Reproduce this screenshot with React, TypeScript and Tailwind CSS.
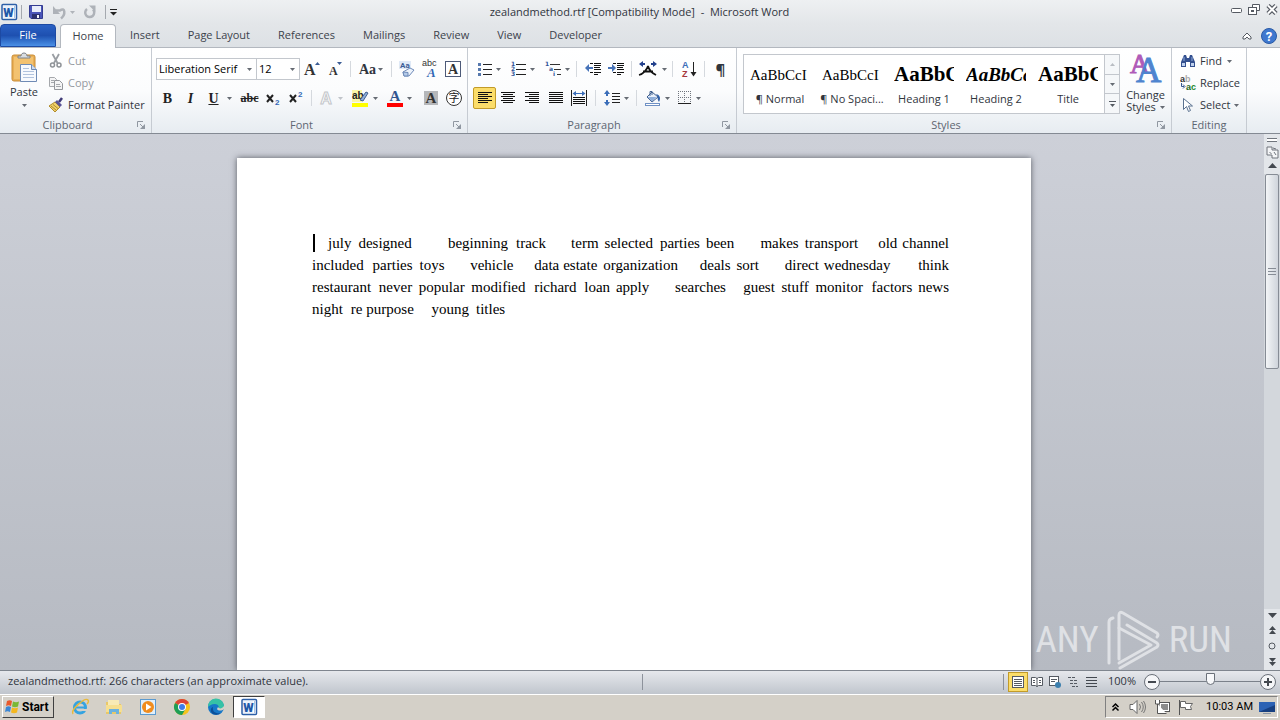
import React, { useState } from 'react';

interface IconProps {
  children: React.ReactNode;
  w?: number;
  h?: number;
}

const Icon: React.FC<IconProps> = ({ children, w = 16, h = 16 }) => (
  <svg width={w} height={h} viewBox={`0 0 ${w} ${h}`} className="block shrink-0 overflow-visible" aria-hidden="true">
    {children}
  </svg>
);

const Arrow: React.FC<{ color?: string }> = ({ color = '#666b73' }) => (
  <Icon w={5} h={3}>
    <path d="M0 0h5L2.5 3z" fill={color} />
  </Icon>
);

interface ToolProps {
  label: string;
  className: string;
  arrow?: boolean;
  children: React.ReactNode;
}

const Tool: React.FC<ToolProps> = ({ label, className, arrow, children }) => (
  <button
    type="button"
    aria-label={label}
    className={`flex h-[22px] shrink-0 items-center justify-center gap-1 rounded-xs hover:bg-amber-100 ${className}`}
  >
    {children}
    {arrow && <Arrow />}
  </button>
);

const Sep = () => <span className="mx-1 h-4 w-px shrink-0 bg-[#d5d9de]" />;

interface GroupProps {
  title: string;
  className: string;
  launcher?: boolean;
  children: React.ReactNode;
}

const Group: React.FC<GroupProps> = ({ title, className, launcher = true, children }) => (
  <section className={`flex shrink-0 flex-col border-r border-[#c6cbd2] ${className}`}>
    <div className="flex-1">{children}</div>
    <div className="flex h-4 items-center text-[#5e6672]">
      <span className="flex-1 text-center">{title}</span>
      {launcher && (
        <button type="button" aria-label={`${title} options`} className="mr-1 flex h-3 w-3 items-center justify-center">
          <Icon w={8} h={8}>
            <path d="M.5 6V.5H6M3 3l3 3" fill="none" stroke="#9097a1" />
            <path d="M8 3v5H3z" fill="#9097a1" />
          </Icon>
        </button>
      )}
    </div>
  </section>
);

/* ---------- icons ---------- */

const Lines: React.FC<{ rows: [number, number][] }> = ({ rows }) => (
  <Icon w={16} h={14}>
    {rows.map(([x, w], i) => (
      <rect key={i} x={x} y={1 + i * 2} width={w} height={1} fill="#111" />
    ))}
  </Icon>
);

const WordIcon = () => (
  <Icon>
    <rect x="1" y=".5" width="14.5" height="15" rx="1" fill="#fff" stroke="#2c5fa8" strokeWidth="1.5" />
    <rect x="13" y="2" width="1" height="12" fill="#a9c3e6" />
    <rect x="2" y="2" width="10" height="12" fill="#eaf2fc" />
    <text x="7.5" y="12.5" fontSize="12" fontWeight="900" fontFamily="Roboto, sans-serif" textAnchor="middle" fill="#1e58a8">W</text>
  </Icon>
);

const SaveIcon = () => (
  <Icon>
    <path d="M1.5 1.5h13v13H3l-1.500-1.500z" fill="#4a55b8" stroke="#343c91" />
    <rect x="4" y="2" width="9" height="6" fill="#e8edfa" />
    <rect x="4" y="10" width="8" height="5" fill="#2b3170" />
    <rect x="9" y="11" width="2" height="3" fill="#f2f4fb" />
  </Icon>
);

const UndoIcon = () => (
  <Icon w={14}>
    <path d="M4 6.500h4c5-4 6 4 1 8" fill="none" stroke="#aeb2b8" strokeWidth="2.500" />
    <path d="M1 2v8h7z" fill="#aeb2b8" />
  </Icon>
);

const RedoIcon = () => (
  <Icon w={14}>
    <path d="M10 5.500a4.500 4.500 0 1 1-6-.5" fill="none" stroke="#aeb2b8" strokeWidth="2.500" />
    <path d="M6 1.500h6.500v6.500z" fill="#aeb2b8" />
  </Icon>
);

const PasteIcon = () => (
  <Icon w={28} h={32}>
    <rect x="2" y="3" width="23" height="26" rx="2" fill="#e9b057" stroke="#c98c36" />
    <rect x="4" y="5" width="19" height="22" fill="#f3c270" />
    <path d="M8 6V4h3c0-4 6-4 6 0h3v2z" fill="#d9dde2" stroke="#7c8289" />
    <path d="M10.500 12.500h11l5 5v12h-16z" fill="#f7fafe" stroke="#6f8bb5" />
    <path d="M21.500 12.500v5h5" fill="#cddbef" stroke="#6f8bb5" />
    <path d="M13 16.500h6M13 19.500h11M13 22.500h11M13 25.500h11" stroke="#b1c3de" />
  </Icon>
);

const CutIcon = () => (
  <Icon>
    <path d="M4.500 1l5 9M11 1L6 10" stroke="#9a9ea3" strokeWidth="1.800" />
    <circle cx="4.500" cy="12" r="2" fill="none" stroke="#8e9297" strokeWidth="1.500" />
    <circle cx="11" cy="12" r="2" fill="none" stroke="#8e9297" strokeWidth="1.500" />
  </Icon>
);

const CopyIcon = () => (
  <Icon>
    <path d="M1.500 2.500h5l2 2v7h-7z" fill="#f4f4f5" stroke="#a5a8ac" />
    <path d="M6.500 5.500h5l3 3v6h-8z" fill="#f4f4f5" stroke="#94979c" />
    <path d="M3 5.500h3M3 7.500h3M8 9.500h4M8 11.500h5" stroke="#a5a8ac" />
  </Icon>
);

const PainterIcon = () => (
  <Icon>
    <path d="M1 9l6-4 5 5-5 5z" fill="#f0d069" stroke="#b08c2c" />
    <path d="M3 9l5 4M5 7.500l5 4" stroke="#b08c2c" />
    <path d="M7 5l2-2 5 5-2 2z" fill="#5a5497" />
    <path d="M11 5l3-4" stroke="#3e3976" strokeWidth="2.500" />
  </Icon>
);

const ClearIcon = () => (
  <Icon w={18} h={18}>
    <rect x="1" y="1" width="12" height="8" fill="#dfe9f7" />
    <text x="2" y="8" fontSize="8" fontWeight="bold" fontFamily="Roboto, sans-serif" fill="#3d5d96">Aa</text>
    <path d="M5 12l7-4 4 2-5 6H6z" fill="#edf3fb" stroke="#6f8bb9" />
    <path d="M5 12l5 .5V16H6z" fill="#b5cbe9" stroke="#6f8bb9" />
  </Icon>
);

const BulletsIcon = () => (
  <Icon w={14} h={14}>
    <path d="M0 1h3v3H0zM0 6h3v3H0zM0 11h3v3H0z" fill="#5678ad" />
    <path d="M5 2.500h9M5 7.500h9M5 12.500h9" stroke="#222" />
  </Icon>
);

const NumberingIcon = () => (
  <Icon w={15} h={16}>
    <g fontSize="6" fontWeight="bold" fontFamily="DejaVu Sans, sans-serif" fill="#2f5597">
      <text x="0" y="5">1</text>
      <text x="0" y="10">2</text>
      <text x="0" y="15">3</text>
    </g>
    <path d="M5 3.500h10M5 8.500h10M5 13.500h10" stroke="#222" />
  </Icon>
);

const MultilevelIcon = () => (
  <Icon w={16} h={16}>
    <g fontSize="6" fontWeight="bold" fontFamily="DejaVu Sans, sans-serif" fill="#2f5597">
      <text x="0" y="5">1</text>
      <text x="4" y="10">a</text>
      <text x="8" y="15">i</text>
    </g>
    <path d="M5 3.500h10M9 8.500h7M12 13.500h4" stroke="#333" />
  </Icon>
);

const IndentIcon: React.FC<{ right?: boolean }> = ({ right }) => (
  <Icon>
    <path d="M5 2.500h3M9 2.500h7M9 4.500h7M9 8.500h7M5 11.500h3M9 11.500h7M9 13.500h4" stroke="#111" />
    <path d="M9 6h6v1H9z" fill="#111" />
    <path d={right ? 'M0 6h4V3l4 4-4 4V8H0z' : 'M8 6H4V3L0 7l4 4V8h4z'} fill="#4773b8" />
  </Icon>
);

const AsianLayoutIcon = () => (
  <Icon w={20} h={16}>
    <path d="M1 14c4-1 8-5 9-9 1 4 4 7 8 9M5 10.500h10" fill="none" stroke="#111" strokeWidth="1.800" />
    <path d="M5 0v6L1 3zM15 0v6l4-3z" fill="#22408c" />
    <path d="M5 3h2M13 3h2" stroke="#22408c" strokeWidth="2" />
  </Icon>
);

const SortIcon = () => (
  <Icon>
    <text x="1" y="7" fontSize="9" fontWeight="bold" fontFamily="Liberation Sans, sans-serif" fill="#3a6db8">A</text>
    <text x="1" y="16" fontSize="9" fontWeight="bold" fontFamily="Liberation Sans, sans-serif" fill="#a5373c">Z</text>
    <path d="M12.500 1v13" stroke="#222" />
    <path d="M9.500 11h6l-3 4.500z" fill="#222" />
  </Icon>
);

const DistributeIcon = () => (
  <Icon w={16} h={16}>
    <path d="M.5 0v16M15.500 0v16" stroke="#222" />
    <path d="M4 3.500h8" stroke="#3a6db8" />
    <path d="M5 1v5L1.500 3.500zM11 1v5l3.500-2.500z" fill="#3a6db8" />
    <path d="M2 7.500h12M2 9.500h12M2 11.500h12M2 13.500h12" stroke="#111" />
  </Icon>
);

const SpacingIcon = () => (
  <Icon w={16} h={16}>
    <path d="M3 0l3 4H4v2H2V4H0zM3 16l3-4H4v-2H2v2H0z" fill="#3a6db8" />
    <path d="M8 3.500h8M8 6.500h8M8 9.500h8M8 12.500h8" stroke="#222" />
  </Icon>
);

const BucketIcon = () => (
  <Icon w={17} h={16}>
    <path d="M8 2l6 5-6 5-5-5z" fill="#e9f0fa" stroke="#41608f" />
    <path d="M3.500 7h9L8 11.500z" fill="#8eaeda" />
    <path d="M6 6V1.500h2V5" fill="none" stroke="#41608f" />
    <path d="M12 4c4 1 5 4 3 8-1-2-2-3-1-5z" fill="#2f5fa8" />
    <rect x="1.500" y="13.500" width="14" height="2" fill="#fff" stroke="#6f91c4" />
  </Icon>
);

const BordersIcon = () => (
  <Icon w={14} h={14}>
    <path d="M.5 0v13M6.500 0v13M12.500 0v13M0 .5h13M0 6.500h13" stroke="#70757d" strokeDasharray="1 1" />
    <path d="M0 12.500h13" stroke="#222" />
  </Icon>
);

const FindIcon = () => (
  <Icon>
    <path d="M4 2h2l1 3h2l1-3h2l3 7v5h-5V9H6v5H1V9z" fill="#34508f" />
    <path d="M2 10h3v3H2zM11 10h3v3h-3z" fill="#bfd1ee" />
    <path d="M4 4v4M12 4v4" stroke="#8eaadb" />
  </Icon>
);

const ReplaceIcon = () => (
  <Icon>
    <g fontSize="9" fontWeight="bold" fontFamily="Liberation Sans, sans-serif">
      <text x="0" y="7" fill="#333">a</text>
      <text x="5" y="7" fill="#aaa">b</text>
      <text x="6" y="15" fill="#1c6a26">a</text>
      <text x="11" y="15" fill="#23892e">c</text>
    </g>
    <path d="M1.500 8v3.500H4M3 9.500l2 2-2 2" fill="none" stroke="#34578f" />
  </Icon>
);

const CursorIcon = () => (
  <Icon>
    <path d="M3.500 1.500v11l3-3 2 5 2-1-2-4.500h4z" fill="#fff" stroke="#5b7290" />
  </Icon>
);

const WindowsFlag = () => (
  <Icon w={16} h={16}>
    <path d="M3 2c2-1 3.500-1 5 0L7 7c-2-1-3-1-5 0z" fill="#e8592b" />
    <path d="M9 2.500c2 1 4 1 6 0L14 7.500c-2 1-4 1-6 0z" fill="#7ab834" />
    <path d="M2 8c2-1 3-1 5 0l-1 5c-2-1-3-1-5 0z" fill="#3a86d4" />
    <path d="M8 8.500c2 1 4 1 6 0l-1 5c-2 1-4 1-6 0z" fill="#f4b71f" />
  </Icon>
);

const ExplorerE = () => (
  <Icon w={18} h={18}>
    <circle cx="9" cy="9.500" r="5.500" fill="none" stroke="#35a3e0" strokeWidth="3" />
    <path d="M5 9.500h9" stroke="#35a3e0" strokeWidth="2" />
    <path d="M10 11h6v2h-6z" fill="#d4d0c8" />
    <path d="M2 16C-1 12 14-1 17 2c1 1 0 3-1 4" fill="none" stroke="#e8b93a" strokeWidth="1.500" />
  </Icon>
);

const FolderIcon = () => (
  <Icon w={18} h={18}>
    <path d="M1 4h6l1 2h8v10H1z" fill="#e9c869" />
    <path d="M3 2h11v5H3z" fill="#f8eab5" />
    <path d="M1 7h16v7H1z" fill="#f6df90" />
    <path d="M4 16v-5h10v5h-3v-2H7v2z" fill="#6cb2de" />
  </Icon>
);

const PlayerIcon = () => (
  <Icon w={18} h={18}>
    <rect x="1.500" y="1.500" width="15" height="15" fill="#e1effa" stroke="#5b9ad0" />
    <circle cx="9" cy="9" r="6" fill="#f08c1e" />
    <path d="M7 5.500v7L12.500 9z" fill="#fff" />
  </Icon>
);

const ChromeIcon = () => (
  <Icon w={18} h={18}>
    <circle cx="9" cy="9" r="8" fill="#f5c31d" />
    <path d="M9 9L2.070 5A8 8 0 0 1 15.930 5z" fill="#dc4437" />
    <path d="M9 9L2.070 5A8 8 0 0 0 9 17l3.500-6z" fill="#1e9e57" />
    <circle cx="9" cy="9" r="4" fill="#fff" />
    <circle cx="9" cy="9" r="3" fill="#3f7de8" />
  </Icon>
);

const EdgeIcon = () => (
  <Icon w={18} h={18}>
    <circle cx="9" cy="9" r="8" fill="#1677c8" />
    <path d="M1 9a8 8 0 0 1 16-1c0 3-3 4-6 3 2-2 0-5-3-5-4 0-6 2-7 3z" fill="#36c2a6" />
    <path d="M6 9c-1 5 3 7 8 6a8 8 0 0 1-8 1c-3-2-3-6 0-7z" fill="#0c4f99" />
    <path d="M17 11c-2 2-6 2-7 0l1-2c1 2 4 2 6-1z" fill="#d4d0c8" />
  </Icon>
);

// rounded triangle drawn as two interlocking ribbons
const WatermarkPlay = () => (
  <Icon w={54} h={60}>
    <g fill="none" stroke="#dfe1e5" strokeWidth="3" strokeLinejoin="round" strokeLinecap="round">
      <path d="M2 53V12q0-3 4-4" />
      <path d="M12 49V5q0-4 4-2l34 20q2 2 0 4" />
      <path d="M12 18l32 17L12 53" />
      <path d="M13 58l37-21q2-2 0-4L20 15" />
    </g>
  </Icon>
);

/* ---------- document ---------- */

type Run = [number, string];

// each run is the width of the blank before a word, then the word
const lines: Run[][] = [
  [[16, 'july'], [7, 'designed'], [36, 'beginning'], [8, 'track'], [25, 'term'], [6, 'selected'], [7, 'parties'], [6, 'been'], [26, 'makes'], [6, 'transport'], [20, 'old'], [5, 'channel']],
  [[0, 'included'], [9, 'parties'], [7, 'toys'], [26, 'vehicle'], [21, 'data'], [4, 'estate'], [6, 'organization'], [22, 'deals'], [6, 'sort'], [26, 'direct'], [5, 'wednesday'], [28, 'think']],
  [[0, 'restaurant'], [8, 'never'], [7, 'popular'], [7, 'modified'], [9, 'richard'], [8, 'loan'], [6, 'apply'], [27, 'searches'], [18, 'guest'], [7, 'stuff'], [7, 'monitor'], [9, 'factors'], [6, 'news']],
  [[0, 'night'], [8, 're'], [4, 'purpose'], [18, 'young'], [7, 'titles'], [450, '']],
];

const Line: React.FC<{ runs: Run[] }> = ({ runs }) => (
  <p className="flex whitespace-nowrap">
    {runs.map(([gap, word], i) => (
      <React.Fragment key={i}>
        <span className="basis-0" style={{ flexGrow: gap }} />
        <span>{word}</span>
      </React.Fragment>
    ))}
  </p>
);

const tabs = ['Insert', 'Page Layout', 'References', 'Mailings', 'Review', 'View', 'Developer'];

const styles = [
  { name: '¶ Normal', sample: 'AaBbCcI', look: 'text-[15px]' },
  { name: '¶ No Spaci...', sample: 'AaBbCcI', look: 'text-[15px]' },
  { name: 'Heading 1', sample: 'AaBbC', look: 'text-[21px] font-bold' },
  { name: 'Heading 2', sample: 'AaBbCc', look: 'text-[19px] font-bold italic' },
  { name: 'Title', sample: 'AaBbC', look: 'text-[21px] font-bold' },
];

const TitleBar = () => (
  <header className="flex h-6 shrink-0 items-center bg-linear-to-b from-[#eef0f2] to-[#e3e6e9] pl-px">
    <div className="flex flex-1 items-center">
      <WordIcon />
      <span className="mr-1.5 ml-1 h-3.5 w-px bg-[#a5a9af]" />
      <button type="button" aria-label="Save" className="w-5"><SaveIcon /></button>
      <button type="button" aria-label="Undo" className="ml-1 flex items-center gap-1"><UndoIcon /><Arrow color="#b0b4ba" /></button>
      <button type="button" aria-label="Redo" className="ml-2"><RedoIcon /></button>
      <span className="mr-1 ml-2 h-3.5 w-px bg-[#a5a9af]" />
      <button type="button" aria-label="Customize">
        <Icon w={7} h={7}><path d="M0 .5h7" stroke="#222" /><path d="M0 3h7L3.500 6.500z" fill="#222" /></Icon>
      </button>
    </div>
    <h1 className="whitespace-pre">zealandmethod.rtf [Compatibility Mode]  -  Microsoft Word</h1>
    <div className="flex flex-1 items-center justify-end gap-1.5 pr-0.5 pb-1">
      <button type="button" aria-label="Minimize">
        <Icon w={11} h={12}><rect x=".5" y="4.500" width="10" height="4" rx="1" fill="#fff" stroke="#555a62" /></Icon>
      </button>
      <button type="button" aria-label="Restore">
        <Icon w={12} h={12}>
          <path d="M4.500 3.500v-3h7v6h-3" fill="#fff" stroke="#555a62" />
          <rect x=".5" y="3.500" width="8" height="7" fill="#fff" stroke="#555a62" />
          <rect x="3" y="6" width="3" height="2" fill="#555a62" />
        </Icon>
      </button>
      <button type="button" aria-label="Close">
        <Icon w={12} h={12}>
          <path d="M2 1.500l8 8M10 1.500l-8 8" stroke="#555a62" strokeWidth="4.500" />
          <path d="M2 1.500l8 8M10 1.500l-8 8" stroke="#fff" strokeWidth="2" />
        </Icon>
      </button>
    </div>
  </header>
);

const TabBar = () => (
  <nav className="flex h-6 shrink-0 items-stretch border-b border-[#b3b8bf] bg-linear-to-b from-[#e3e6e9] to-[#dde1e5] text-[#3c424b]">
    <button type="button" className="w-14 rounded-t-sm border border-[#1d4aa3] bg-linear-to-b from-[#2a61c4] via-[#1e50b0] to-[#4a90e6] text-white">File</button>
    <button type="button" className="-mb-px ml-1 w-14 rounded-t-sm border border-b-0 border-[#b3b8bf] bg-white">Home</button>
    {tabs.map((tab) => (
      <button key={tab} type="button" className="px-3.5">{tab}</button>
    ))}
    <div className="ml-auto flex items-center gap-2 pr-0.5">
      <button type="button" aria-label="Minimize the Ribbon">
        <Icon w={10} h={8}><path d="M1 5l4-4 4 4v2H7L5 5 3 7H1z" fill="#fff" stroke="#555a62" /></Icon>
      </button>
      <button type="button" aria-label="Help">
        <Icon w={18} h={18}>
          <circle cx="9" cy="9" r="7.500" fill="#3f78cf" stroke="#2a5aa5" />
          <text x="9" y="14" fontSize="13" fontWeight="bold" fontFamily="Roboto, sans-serif" textAnchor="middle" fill="#fff">?</text>
        </Icon>
      </button>
    </div>
  </nav>
);

const Ribbon = () => {
  const [font, setFont] = useState('Liberation Serif');
  const [size, setSize] = useState('12');

  return (
    <div className="flex h-[86px] shrink-0 border-b border-[#848a93] bg-linear-to-b from-white via-[#fbfcfd] to-[#e7ecf1] text-[#30353d]">
      <Group title="Clipboard" className="w-[152px]">
        <div className="flex">
          <button type="button" className="flex w-12 flex-col items-center pt-1">
            <PasteIcon />
            <span className="mb-1 leading-4">Paste</span>
            <Arrow />
          </button>
          <div className="flex flex-col pt-0.5">
            <button type="button" disabled className="flex h-[22px] items-center gap-1 text-[#9599a0]"><CutIcon />Cut</button>
            <button type="button" disabled className="flex h-[22px] items-center gap-1 text-[#9599a0]"><CopyIcon />Copy</button>
            <button type="button" className="flex h-[22px] items-center gap-1 whitespace-nowrap"><PainterIcon />Format Painter</button>
          </div>
        </div>
      </Group>

      <Group title="Font" className="w-[316px]">
        <div className="mt-2.5 flex h-[22px] items-center pl-1">
          <label className="flex h-[22px] w-[101px] items-center border border-[#c3c7cd] bg-white pr-1">
            <select aria-label="Font" value={font} onChange={(e) => setFont(e.target.value)} className="min-w-0 flex-1 appearance-none pl-0.5 text-black outline-none">
              <option>Liberation Serif</option>
              <option>Liberation Sans</option>
            </select>
            <Arrow />
          </label>
          <label className="flex h-[22px] w-[43px] items-center border border-l-0 border-[#c3c7cd] bg-white pr-1">
            <select aria-label="Font Size" value={size} onChange={(e) => setSize(e.target.value)} className="min-w-0 flex-1 appearance-none pl-0.5 text-black outline-none">
              <option>12</option>
              <option>14</option>
            </select>
            <Arrow />
          </label>
          <Tool label="Grow Font" className="w-6">
            <Icon><text x="0" y="14" fontSize="16" fontWeight="bold" fontFamily="Liberation Serif, serif" fill="#333">A</text><path d="M11 4h5l-2.500-3z" fill="#3a5b94" /></Icon>
          </Tool>
          <Tool label="Shrink Font" className="w-[22px]">
            <Icon><text x="2" y="14" fontSize="12" fontWeight="bold" fontFamily="Liberation Serif, serif" fill="#333">A</text><path d="M10 1h5l-2.500 3z" fill="#3a5b94" /></Icon>
          </Tool>
          <Sep />
          <Tool label="Change Case" className="w-8" arrow>
            <span className="-mr-0.5 font-['Liberation_Serif',serif] text-[14px] font-bold">Aa</span>
          </Tool>
          <Sep />
          <Tool label="Clear Formatting" className="w-[22px]"><ClearIcon /></Tool>
          <Tool label="Phonetic Guide" className="w-[23px]">
            <Icon w={16} h={18}>
              <text x="0" y="6" fontSize="9" fontFamily="Liberation Sans, sans-serif" fill="#333">abc</text>
              <text x="5" y="17" fontSize="13" fontWeight="bold" fontStyle="italic" fontFamily="Liberation Serif, serif" fill="#3267b5">A</text>
            </Icon>
          </Tool>
          <Tool label="Character Border" className="w-[23px]">
            <Icon><rect x=".5" y=".5" width="15" height="15" fill="#fff" stroke="#4d5a78" /><text x="8" y="13" fontSize="14" fontWeight="bold" fontFamily="Liberation Serif, serif" textAnchor="middle" fill="#333">A</text></Icon>
          </Tool>
        </div>
        <div className="mt-[7px] flex h-[22px] items-center pl-1 font-['Liberation_Serif',serif] text-[14px] font-bold text-[#222]">
          <Tool label="Bold" className="w-[23px]">B</Tool>
          <Tool label="Italic" className="w-[23px] italic">I</Tool>
          <Tool label="Underline" className="w-9 underline" arrow><span className="mr-1">U</span></Tool>
          <Tool label="Strikethrough" className="w-[23px] text-[12px] line-through">abc</Tool>
          <Tool label="Subscript" className="w-[23px]">
            <Icon><path d="M2 5l6 7M8 5l-6 7" stroke="#222" strokeWidth="2" /><text x="10" y="15" fontSize="8" fontWeight="bold" fontFamily="Liberation Sans, sans-serif" fill="#3267b5">2</text></Icon>
          </Tool>
          <Tool label="Superscript" className="w-[23px]">
            <Icon><path d="M2 5l6 7M8 5l-6 7" stroke="#222" strokeWidth="2" /><text x="10" y="7" fontSize="8" fontWeight="bold" fontFamily="Liberation Sans, sans-serif" fill="#3267b5">2</text></Icon>
          </Tool>
          <Sep />
          <Tool label="Text Effects" className="w-[29px]">
            <Icon><text x="8" y="14" fontSize="16" fontWeight="bold" fontFamily="Liberation Sans, sans-serif" textAnchor="middle" fill="#fff" stroke="#c3c6ca">A</text></Icon>
            <Arrow color="#c0c4ca" />
          </Tool>
          <Tool label="Highlight" className="ml-1 w-8" arrow>
            <Icon w={17} h={17}>
              <rect x="0" y="0" width="10" height="12" fill="#fbf7a8" />
              <text x="0" y="9" fontSize="10" fontFamily="Liberation Sans, sans-serif" fill="#222">ab</text>
              <path d="M8 10l6-8 2 1-5 8z" fill="#8eaeda" stroke="#41608f" />
              <rect x="0" y="13" width="16" height="4" fill="#ff0" />
            </Icon>
          </Tool>
          <Tool label="Font Color" className="ml-0.5 w-8" arrow>
            <Icon w={16} h={17}>
              <text x="8" y="11" fontSize="15" fontWeight="bold" fontFamily="Liberation Serif, serif" textAnchor="middle" fill="#31558f">A</text>
              <rect x="0" y="13" width="16" height="4" fill="#f00" />
            </Icon>
          </Tool>
          <Tool label="Character Shading" className="ml-1 w-[23px]">
            <Icon><rect x="1" y="1" width="14" height="14" fill="#b5b7ba" /><text x="8" y="13" fontSize="15" fontWeight="bold" fontFamily="Liberation Serif, serif" textAnchor="middle" fill="#333">A</text></Icon>
          </Tool>
          <Tool label="Enclose Characters" className="w-[23px]">
            <Icon><circle cx="8" cy="8" r="7.500" fill="#fff" stroke="#333" /><text x="8" y="12" fontSize="11" fontWeight="normal" fontFamily="Noto Sans CJK SC, sans-serif" textAnchor="middle" fill="#222">字</text></Icon>
          </Tool>
        </div>
      </Group>

      <Group title="Paragraph" className="w-[269px]">
        <div className="mt-2.5 flex h-[22px] items-center pl-1">
          <Tool label="Bullets" className="w-[34px]" arrow><BulletsIcon /></Tool>
          <Tool label="Numbering" className="w-[34px]" arrow><NumberingIcon /></Tool>
          <Tool label="Multilevel List" className="ml-0.5 w-[30px]" arrow><MultilevelIcon /></Tool>
          <Sep />
          <Tool label="Decrease Indent" className="w-[23px]"><IndentIcon /></Tool>
          <Tool label="Increase Indent" className="w-[23px]"><IndentIcon right /></Tool>
          <Sep />
          <Tool label="Asian Layout" className="w-8" arrow><AsianLayoutIcon /></Tool>
          <Sep />
          <Tool label="Sort" className="w-[23px]"><SortIcon /></Tool>
          <Sep />
          <Tool label="Show Marks" className="w-[23px] text-[15px] font-bold">¶</Tool>
        </div>
        <div className="mt-[7px] flex h-[22px] items-center pl-[5px]">
          <Tool label="Align Left" className="w-[23px] border border-[#c29b29] bg-[#fbdd6a]">
            <Lines rows={[[1, 14], [1, 10], [1, 14], [1, 10], [1, 14], [1, 10]]} />
          </Tool>
          <Tool label="Center" className="w-6"><Lines rows={[[1, 14], [3, 10], [1, 14], [3, 10], [1, 14], [3, 10]]} /></Tool>
          <Tool label="Align Right" className="w-6"><Lines rows={[[1, 14], [5, 10], [1, 14], [5, 10], [1, 14], [5, 10]]} /></Tool>
          <Tool label="Justify" className="w-[23px]"><Lines rows={[[1, 14], [1, 14], [1, 14], [1, 14], [1, 14], [1, 14]]} /></Tool>
          <Tool label="Distributed" className="w-6"><DistributeIcon /></Tool>
          <Sep />
          <Tool label="Line Spacing" className="w-8" arrow><SpacingIcon /></Tool>
          <Sep />
          <Tool label="Shading" className="w-8" arrow><BucketIcon /></Tool>
          <Tool label="Borders" className="w-8" arrow><BordersIcon /></Tool>
        </div>
      </Group>

      <Group title="Styles" className="w-[435px]">
        <div className="flex pt-1.5 pl-1.5">
          <div className="flex h-[60px] w-[377px] border border-[#c3c7cd] bg-white">
            {styles.map((s) => (
              <button key={s.name} type="button" className="flex w-[72px] flex-col items-center">
                <span className={`flex h-10 w-[60px] items-center overflow-hidden font-['Liberation_Serif',serif] whitespace-nowrap text-black ${s.look}`}>{s.sample}</span>
                <span className="-mt-1 leading-4 whitespace-nowrap">{s.name}</span>
              </button>
            ))}
            <div className="flex flex-1 flex-col divide-y divide-[#c3c7cd] border-l border-[#c3c7cd] bg-[#f5f7f9]">
              <button type="button" aria-label="Row up" className="flex flex-1 items-center justify-center"><Icon w={5} h={3}><path d="M0 3h5L2.500 0z" fill="#b9bdc3" /></Icon></button>
              <button type="button" aria-label="Row down" className="flex flex-1 items-center justify-center"><Arrow /></button>
              <button type="button" aria-label="More" className="flex flex-1 items-center justify-center"><Icon w={7} h={6}><path d="M0 .5h7" stroke="#555a62" /><path d="M1 3h5L3.500 6z" fill="#555a62" /></Icon></button>
            </div>
          </div>
          <button type="button" className="flex flex-1 flex-col items-center leading-3">
            <Icon w={32} h={35}>
              <text x="0" y="19" fontSize="27" fontFamily="Liberation Serif, serif" fill="#b05bb8" stroke="#b05bb8">A</text>
              <text x="6" y="28" fontSize="35" fontFamily="Liberation Serif, serif" fill="#4f84cf" stroke="#4f84cf">A</text>
            </Icon>
            <span>Change</span>
            <span className="flex items-center gap-1">Styles<Arrow /></span>
          </button>
        </div>
      </Group>

      <Group title="Editing" launcher={false} className="w-[75px]">
        <div className="flex flex-col pt-0.5 pl-2">
          <button type="button" className="flex h-[22px] items-center gap-1"><FindIcon />Find<span className="ml-px"><Arrow /></span></button>
          <button type="button" className="flex h-[22px] items-center gap-1"><ReplaceIcon />Replace</button>
          <button type="button" className="flex h-[22px] items-center gap-1"><CursorIcon />Select<Arrow /></button>
        </div>
      </Group>
    </div>
  );
};

const ScrollBar = () => (
  <div className="flex w-4 shrink-0 flex-col items-center bg-[#e3e6ea]">
    <button type="button" aria-label="Split" className="mt-1 h-1 w-2.5 border-y border-[#70757d] bg-white" />
    <button type="button" aria-label="View Ruler" className="mt-1">
      <Icon w={13} h={13}>
        <path d="M1 1h5v3h6v8H6V9H1z" fill="#f4f5f7" stroke="#70757d" />
        <path d="M3.500 6l2 2M7 2l3 1M8 6l2 3" stroke="#70757d" />
      </Icon>
    </button>
    <button type="button" aria-label="Scroll up" className="mt-1"><Icon w={9} h={5}><path d="M0 5h9L4.500 0z" fill="#444950" /></Icon></button>
    <div className="mt-1.5 w-full flex-1 bg-[#d3d7dc]">
      <div className="ml-px flex h-[195px] w-3.5 items-center justify-center rounded-xs border border-[#868c95] bg-linear-to-r from-[#f3f5f7] to-[#cfd4db]">
        <Icon w={8} h={7}><path d="M0 .5h8M0 3.500h8M0 6.500h8" stroke="#868c95" /></Icon>
      </div>
    </div>
    <button type="button" aria-label="Scroll down" className="mt-1 mb-2"><Icon w={9} h={5}><path d="M0 0h9L4.500 5z" fill="#444950" /></Icon></button>
    <button type="button" aria-label="Previous page" className="mb-2"><Icon w={7} h={8}><path d="M0 4h7L3.500 0zM0 8h7L3.500 4z" fill="#444950" /></Icon></button>
    <button type="button" aria-label="Browse object" className="mb-2"><Icon w={8} h={8}><circle cx="4" cy="4" r="3" fill="none" stroke="#555a62" /></Icon></button>
    <button type="button" aria-label="Next page" className="mb-1"><Icon w={7} h={8}><path d="M0 0h7L3.500 4zM0 4h7L3.500 8z" fill="#444950" /></Icon></button>
  </div>
);

const DocumentArea = () => (
  <div className="flex min-h-0 flex-1">
    <main className="relative flex flex-1 justify-center overflow-hidden bg-linear-to-b from-[#cdd0d8] to-[#b6bac2] pt-6 pl-1">
      <article className="w-[794px] bg-white pt-[74px] pr-[82px] pl-[75px] font-['Liberation_Serif',serif] text-[15px] leading-[22px] text-black shadow-[0_0_6px_rgba(60,64,72,0.8)]">
        <div className="relative">
          <span className="absolute top-0.5 left-px h-[18px] w-0.5 bg-black" />
          {lines.map((runs, i) => (
            <Line key={i} runs={runs} />
          ))}
        </div>
      </article>
      <div className="absolute right-8 bottom-0 flex items-center font-['Liberation_Sans_Narrow','Roboto_Condensed',Roboto,sans-serif] text-[37px] text-[#dfe1e5]">
        <span>ANY</span>
        <span className="mx-2"><WatermarkPlay /></span>
        <span>RUN</span>
      </div>
    </main>
    <ScrollBar />
  </div>
);

const StatusBar = () => {
  const [zoom, setZoom] = useState(50);

  return (
    <footer className="flex h-6 shrink-0 items-center border-t border-[#7f858e] bg-linear-to-b from-[#e6e8ec] to-[#c0c5cd] pb-0.5 text-[#30353d]">
      <span className="flex-1 pl-2">zealandmethod.rtf: 266 characters (an approximate value).</span>
      <span className="h-4 w-px bg-[#8d929b]" />
      <div className="flex flex-1 items-center justify-end pr-1">
        <span className="mr-1 h-4 w-px bg-[#8d929b]" />
        <button type="button" aria-label="Print Layout" className="flex h-5 w-5 items-center justify-center border border-[#c29b29] bg-[#fbdd6a]">
          <Icon w={12} h={12}><rect x=".5" y=".5" width="11" height="11" fill="#fff" stroke="#555a62" /><path d="M2 3.500h8M2 5.500h8M2 7.500h8M2 9.500h8" stroke="#555a62" /></Icon>
        </button>
        <button type="button" aria-label="Full Screen Reading" className="flex w-[18px] justify-center">
          <Icon w={12} h={12}><path d="M.5 1.500h4l1.500 1 1.500-1h4v8h-4l-1.500 1-1.500-1h-4zM6 2v9M2 4.500h2M2 6.500h2M8 4.500h2M8 6.500h2" fill="#fff" stroke="#555a62" /></Icon>
        </button>
        <button type="button" aria-label="Web Layout" className="flex w-[18px] justify-center">
          <Icon w={12} h={12}><rect x=".5" y=".5" width="9" height="9" fill="#fff" stroke="#555a62" /><path d="M2 3.500h6M2 5.500h4" stroke="#555a62" /><circle cx="9" cy="9" r="3" fill="#3c7fae" /></Icon>
        </button>
        <button type="button" aria-label="Outline" className="flex w-[18px] justify-center">
          <Icon w={12} h={12}><path d="M1 1.500h8M3 4.500h8M3 7.500h8M5 10.500h6" stroke="#555a62" strokeDasharray="3 1" /></Icon>
        </button>
        <button type="button" aria-label="Draft" className="flex w-[18px] justify-center">
          <Icon w={11} h={12}><path d="M0 1.500h11M0 4.500h11M0 7.500h11M0 10.500h11" stroke="#444950" /></Icon>
        </button>
        <span className="mx-2">100%</span>
        <button type="button" aria-label="Zoom out">
          <Icon w={16} h={16}><circle cx="8" cy="8" r="7.500" fill="#f5f6f8" stroke="#6a7079" /><path d="M4 8h8" stroke="#444950" strokeWidth="2" /></Icon>
        </button>
        <input
          type="range"
          aria-label="Zoom"
          value={zoom}
          onChange={(e) => setZoom(Number(e.target.value))}
          className="h-4 w-[100px] appearance-none bg-transparent [&::-webkit-slider-runnable-track]:h-px [&::-webkit-slider-runnable-track]:bg-[#7b818a] [&::-webkit-slider-thumb]:-mt-2 [&::-webkit-slider-thumb]:h-3 [&::-webkit-slider-thumb]:w-[9px] [&::-webkit-slider-thumb]:appearance-none [&::-webkit-slider-thumb]:rounded-b-full [&::-webkit-slider-thumb]:border [&::-webkit-slider-thumb]:border-[#6a7079] [&::-webkit-slider-thumb]:bg-[#f7f8fa]"
        />
        <button type="button" aria-label="Zoom in">
          <Icon w={16} h={16}><circle cx="8" cy="8" r="7.500" fill="#f5f6f8" stroke="#6a7079" /><path d="M4 8h8M8 4v8" stroke="#444950" strokeWidth="2" /></Icon>
        </button>
      </div>
    </footer>
  );
};

const quickLaunch = [
  { name: 'Internet Explorer', icon: <ExplorerE /> },
  { name: 'Explorer', icon: <FolderIcon /> },
  { name: 'Media Player', icon: <PlayerIcon /> },
  { name: 'Chrome', icon: <ChromeIcon /> },
  { name: 'Edge', icon: <EdgeIcon /> },
];

const Taskbar = () => (
  <div className="flex h-[26px] shrink-0 items-center border-t border-white bg-[#d4d0c8] pb-0.5 text-black">
    <button type="button" className="ml-0.5 flex h-[22px] w-[52px] items-center gap-0.5 border border-t-white border-r-[#404040] border-b-[#404040] border-l-white pl-px font-['Roboto',sans-serif] text-[12px] font-bold">
      <WindowsFlag />
      Start
    </button>
    <div className="ml-[9px] flex items-center">
      {quickLaunch.map((app) => (
        <button key={app.name} type="button" aria-label={app.name} className="flex w-[34px] justify-center">{app.icon}</button>
      ))}
      <button type="button" aria-label="Word" className="flex h-[22px] w-8 items-center justify-center border border-t-[#404040] border-r-white border-b-white border-l-[#404040] bg-white">
        <WordIcon />
      </button>
    </div>
    <div className="mr-0.5 ml-auto flex h-[22px] items-center border border-t-[#808080] border-r-white border-b-white border-l-[#808080] pr-0.5 pl-1.5">
      <button type="button" aria-label="Show hidden icons" className="mr-2.5">
        <Icon w={7} h={8}><path d="M.5 4l3-3 3 3M.5 7.500l3-3 3 3" fill="none" stroke="#000" strokeWidth="1.500" /></Icon>
      </button>
      <button type="button" aria-label="Volume" className="mr-2">
        <Icon w={17} h={16}><path d="M1 5.500h3l4-4v13l-4-4H1z" fill="#fff" stroke="#666" /><path d="M10.500 5q2 3 0 6M12.500 3q3.500 5 0 10M14.500 2q4 6 0 12" fill="none" stroke="#777" /></Icon>
      </button>
      <button type="button" aria-label="Network" className="mr-2">
        <Icon w={16} h={16}><rect x="5" y="3.500" width="10.500" height="9" fill="#fff" stroke="#555" /><rect x="7" y="5" width="7" height="6" fill="#8b8b8b" /><path d="M1.500 1v4h4V1M3.500 5v9.500h9" fill="#fff" stroke="#555" /></Icon>
      </button>
      <button type="button" aria-label="Action Center" className="mr-3">
        <Icon w={16} h={16}><path d="M1.500 1v15" stroke="#555" /><path d="M2.500 2.500h5v2h7l-2 3 1 3h-6v-2h-5z" fill="#fff" stroke="#666" /></Icon>
      </button>
      <span className="mr-1.5 font-['Roboto',sans-serif] text-[11px] leading-5">10:03 AM</span>
      <button type="button" aria-label="Show desktop">
        <Icon w={16} h={14}><rect x="0" y="2" width="16" height="10" fill="#2c62b4" /><path d="M0 12L16 5v7z" fill="#173f80" /><path d="M4 13.500h8" stroke="#8b96a6" /></Icon>
      </button>
    </div>
  </div>
);

const App: React.FC = () => (
  <div className="flex h-screen flex-col overflow-hidden font-['Open_Sans','Noto_Sans',sans-serif] text-[11px] text-[#30353d]">
    <TitleBar />
    <TabBar />
    <Ribbon />
    <DocumentArea />
    <StatusBar />
    <Taskbar />
  </div>
);

export default App;
